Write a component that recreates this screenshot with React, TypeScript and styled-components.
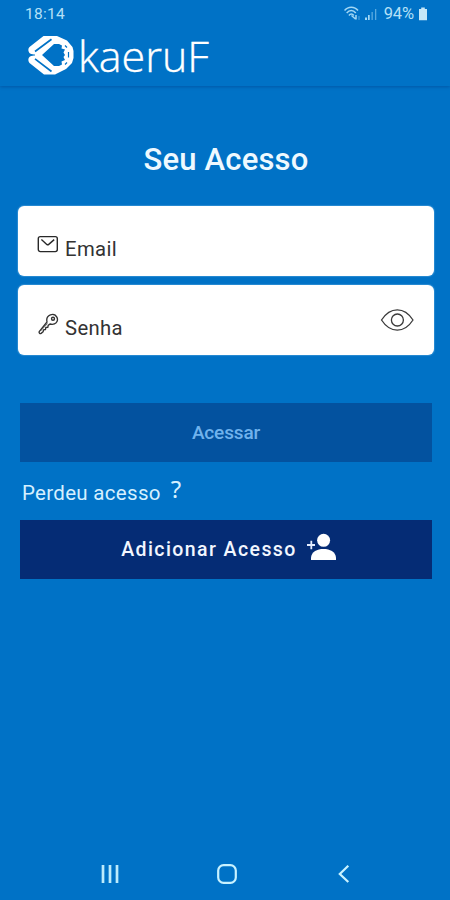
import React from "react";
import styled, { createGlobalStyle } from "styled-components";

const GlobalStyle = createGlobalStyle`
  * { box-sizing: border-box; }
  body { margin: 0; background: #0072c6; font-family: Roboto, sans-serif; }
  svg { display: block; flex: none; }
`;

const Screen = styled.div`
  width: 450px;
  height: 900px;
  display: flex;
  flex-direction: column;
  background: #0072c6;
  overflow: hidden;
`;

const Header = styled.header`
  height: 86px;
  flex: none;
  box-shadow: 0 1px 3px rgba(0, 50, 120, 0.4);
`;

const StatusBar = styled.div`
  height: 28px;
  padding: 0 22px 0 25px;
  display: flex;
  align-items: center;
  justify-content: space-between;
  color: #b5e0f7;
  font-size: 15.5px;
  line-height: 28px;
`;

const Clock = styled.span`
  letter-spacing: 0.25px;
`;

const StatusIcons = styled.div`
  display: flex;
  align-items: center;
`;

const Battery = styled.span`
  margin: 0 4px 0 6px;
  font-size: 16.5px;
  letter-spacing: -0.1px;
`;

const Brand = styled.div`
  display: flex;
  padding: 7px 0 0 28px;
  gap: 2px;
`;

const BrandName = styled.span`
  margin-top: -1px;
  color: #fff;
  font: 300 43px/43px "Open Sans", sans-serif;
  -webkit-text-stroke: 0.35px #fff;
`;

const Content = styled.main`
  flex: 1;
  display: flex;
  flex-direction: column;
  padding: 54px 16px 0 18px;
`;

const Title = styled.h1`
  margin: 0;
  height: 40px;
  color: #eef9ff;
  text-align: center;
  font-size: 31px;
  font-weight: 500;
  line-height: 40px;
  letter-spacing: 0.2px;
`;

const Fields = styled.div`
  display: flex;
  flex-direction: column;
  gap: 9px;
  margin-top: 26px;
`;

const Field = styled.label`
  height: 70px;
  display: flex;
  align-items: flex-start;
  padding: 28px 20px 0 19px;
  background: #fff;
  border-radius: 6px;
  box-shadow: 0 0 1px 1px rgba(120, 190, 235, 0.35);
`;

const FieldText = styled.span`
  flex: 1;
  margin: 2px 0 0 6px;
  color: #333;
  font-size: 20.3px;
  line-height: 26px;
  letter-spacing: 0.35px;
`;

const EyeSlot = styled.span`
  margin-top: -5px;
`;

const Button = styled.button<{ $primary?: boolean }>`
  height: 59px;
  margin: 0 2px;
  padding: ${(p) => (p.$primary ? "0 0 0 5px" : "0")};
  border: 0;
  display: flex;
  align-items: center;
  justify-content: center;
  gap: 9px;
  font-family: Roboto, sans-serif;
  font-weight: 500;
  font-size: ${(p) => (p.$primary ? "19.5px" : "19px")};
  letter-spacing: ${(p) => (p.$primary ? "1.42px" : "-0.15px")};
  color: ${(p) => (p.$primary ? "#f2f7ff" : "#70b2ed")};
  background: ${(p) => (p.$primary ? "#052c75" : "#03529f")};

  svg {
    margin-top: -5px;
  }
`;

const Actions = styled.div`
  display: flex;
  flex-direction: column;
  margin-top: 48px;
`;

const Recover = styled.a`
  height: 58px;
  display: flex;
  align-items: center;
  gap: 10px;
  padding: 3px 0 0 4px;
  color: #d5f0ff;
  font-size: 20.5px;
  letter-spacing: 0.3px;
`;

const QuestionMark = styled.span`
  font: 400 24px/24px "Noto Sans", sans-serif;
  padding-bottom: 7px;
`;

const NavBar = styled.nav`
  height: 50px;
  flex: none;
  display: grid;
  grid-template-columns: 20px 20px 12px;
  column-gap: 97px;
  padding: 14px 0 0 99.5px;

  svg:last-child {
    margin-left: 4px;
  }
`;

const WifiIcon = () => (
  <svg width="20" height="18" viewBox="0 0 20 18" fill="none" stroke="#a2d8f5" strokeWidth="1.5">
    <path d="M.5 5.5C4 1 10.5 1 14 5.5M2.7 8c2.8-3.4 6.3-3.4 9.1 0M4.9 10.4c1.5-1.8 3.4-1.8 4.9 0" />
    <path d="m7.5 10.5 4 3.5M12 10v4.5" />
    <path d="M15 11v4" strokeWidth="1" opacity=".5" />
  </svg>
);

const SignalIcon = () => (
  <svg width="14" height="18" viewBox="0 0 14 18" fill="#a2d8f5">
    <path d="M1 12.5h2V15H1zM4 10h1.7v5H4z" />
    <path d="M7.5 7h1.3v8H7.5zM11 4h1.3v11H11z" opacity=".55" />
  </svg>
);

const BatteryIcon = () => (
  <svg width="10" height="16" viewBox="0 0 10 16" fill="#c5e7f8">
    <path d="M3.2 1.5h3.6V3H9v11.3H1V3h2.2z" />
  </svg>
);

const BrandMark = () => (
  <svg width="48" height="42" viewBox="0 0 48 42">
    <path
      d="M15.5 1H29L39 5.5 44.5 12 45.5 16V23L44 28 38 34 27 39.5H16L1.5 28C-.2 26 0 23 2 21.5L6 20 2 18.5C0 16.5-.2 13.5 1.5 12Z"
      fill="#fff"
    />
    <path d="M26 9H31L34 10.5 33.5 13.5 37 14.5 35.5 17.5 37 20 35.5 22 37 25 33.5 26.5 34 29.5 31 31H26L14 20Z" fill="#0072c6" />
    <path d="M37 10.5 39 12.5M37 29.5 39 27.5M40.5 17v5.5" stroke="#0072c6" strokeWidth="1.2" fill="none" />
    <path d="M7 16.5 23.5 4.2M7 23.8 23.5 36.5" stroke="#0072c6" strokeWidth="1.7" fill="none" />
    <path d="M0 20h7" stroke="#0072c6" strokeWidth="1" />
  </svg>
);

const MailIcon = () => (
  <svg width="22" height="22" viewBox="0 0 22 22" fill="none" stroke="#292929" strokeWidth="1.4">
    <rect x="1.3" y="2.6" width="19" height="15" rx="2" />
    <path d="m4.4 5.6 5.4 4.8c.6.5 1.3.5 1.9 0L17.2 5.6" />
  </svg>
);

const KeyIcon = () => (
  <svg width="22" height="22" viewBox="0 0 22 22" fill="none" stroke="#333" strokeWidth="1.35" strokeLinejoin="round">
    <path d="M10 9C9.2 5.4 10.8 2.8 13.4 1.8c2.7-1 5.4.2 6.6 2.6 1.2 2.6 0 5.4-2.6 6.5-1.6.7-3 .5-4.4.1l-1.8 1.4-.4 2-2 .1-.3 2-2 .3-.4 2-2 1.6c-1.2.7-2.3-.4-1.9-1.8Z" />
    <path d="m3.5 18 7-7.5" strokeWidth=".7" />
    <circle cx="16" cy="5.7" r="1.5" />
  </svg>
);

const EyeIcon = () => (
  <svg width="34" height="24" viewBox="0 0 34 24" fill="none" stroke="#3a3a3a" strokeWidth="1.3">
    <path d="M1.5 12C10.3-1.5 24.3-1.5 33 12 24.3 25.5 10.3 25.5 1.5 12Z" />
    <circle cx="17.4" cy="12" r="6" />
  </svg>
);

const AddUserIcon = () => (
  <svg width="30" height="28" viewBox="0 0 30 28" fill="#fff">
    <circle cx="17.6" cy="7.3" r="6.5" />
    <path d="M5 27v-2.5C5.6 18.6 11 16 17.5 16S29.4 18.6 30 24.5V27Z" />
    <path d="M1 12h8M5.3 7.8v8.5" stroke="#e4edff" strokeWidth="1.8" />
  </svg>
);

const RecentsIcon = () => (
  <svg width="20" height="20" viewBox="0 0 20 20" stroke="#bcebfc" strokeWidth="2.7">
    <path d="M3 1v18M10 1v18M17 1v18" />
  </svg>
);

const HomeIcon = () => (
  <svg width="20" height="20" viewBox="0 0 20 20" fill="none" stroke="#c8f2ff" strokeWidth="2.2">
    <rect x="1.2" y="1.2" width="17.6" height="17.6" rx="5.4" />
  </svg>
);

const BackIcon = () => (
  <svg width="12" height="20" viewBox="0 0 12 20" fill="none" stroke="#c8f2ff" strokeWidth="2.2">
    <path d="M10.3 1.8 1.8 10l8.5 8" />
  </svg>
);

export default function App() {
  return (
    <Screen>
      <GlobalStyle />
      <Header>
        <StatusBar>
          <Clock>18:14</Clock>
          <StatusIcons>
            <WifiIcon />
            <SignalIcon />
            <Battery>94%</Battery>
            <BatteryIcon />
          </StatusIcons>
        </StatusBar>
        <Brand>
          <BrandMark />
          <BrandName>kaeruF</BrandName>
        </Brand>
      </Header>
      <Content>
        <Title>Seu Acesso</Title>
        <Fields>
          <Field>
            <MailIcon />
            <FieldText>Email</FieldText>
          </Field>
          <Field>
            <KeyIcon />
            <FieldText>Senha</FieldText>
            <EyeSlot>
              <EyeIcon />
            </EyeSlot>
          </Field>
        </Fields>
        <Actions>
          <Button>Acessar</Button>
          <Recover>
            <span>Perdeu acesso</span>
            <QuestionMark>?</QuestionMark>
          </Recover>
          <Button $primary>
            <span>Adicionar Acesso</span>
            <AddUserIcon />
          </Button>
        </Actions>
      </Content>
      <NavBar>
        <RecentsIcon />
        <HomeIcon />
        <BackIcon />
      </NavBar>
    </Screen>
  );
}
